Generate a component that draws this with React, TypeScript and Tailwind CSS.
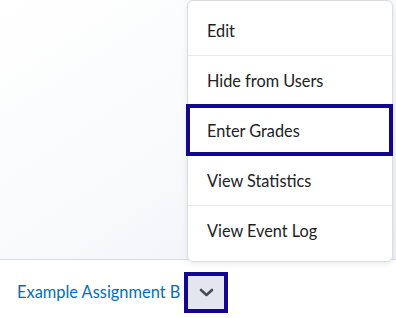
import React from "react";

const items = ["Edit", "Hide from Users", "Enter Grades", "View Statistics", "View Event Log"];

export default function App() {
  return (
    <div className="relative w-[396px] h-[318px] overflow-hidden bg-white" style={{ fontFamily: "Lato, 'Noto Sans', sans-serif" }}>
      <div className="h-[260px] border-b border-[#d6d9de] bg-gradient-to-br from-white via-[#f9fafc] to-[#eef0f5]" />
      <div className="flex items-center h-[58px] pl-[17px] pt-[6px]">
        <span className="text-[16.4px] text-[#006fbf] leading-none">Example Assignment B</span>
        <div className="ml-[4px] w-[44px] h-[41px] border-[4px] border-[#14078f] bg-[#e3e6ee] flex items-center justify-center">
          <svg width="15" height="9" viewBox="0 0 15 9">
            <polyline points="2,2 7.5,7 13,2" fill="none" stroke="#494c55" strokeWidth="2.6" strokeLinecap="round" strokeLinejoin="round" />
          </svg>
        </div>
      </div>
      <div className="absolute left-[187px] top-[0px] w-[206px] bg-white border border-[#d9dce1] rounded-[6px] shadow-[0_2px_6px_rgba(0,0,0,0.08)] pt-[5px] pb-[5px]">
        {items.map((t, i) => (
          <div key={t} className={`relative h-[50px] flex items-center pl-[19px] pt-[1px] text-[16.3px] text-[#202122] ${i < items.length - 1 ? "border-b border-[#e3e6ea]" : ""}`}>
            {t === "Enter Grades" && (
              <div className="absolute left-[-2px] right-[-1px] top-[-2px] bottom-[-1px] border-[4px] border-[#14078f]" />
            )}
            <span className="relative">{t}</span>
          </div>
        ))}
      </div>
    </div>
  );
}
